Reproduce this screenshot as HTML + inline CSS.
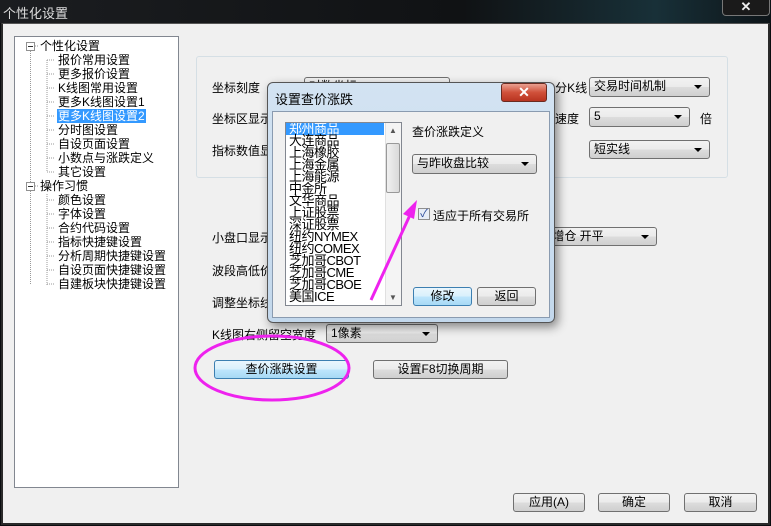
<!DOCTYPE html>
<html><head><meta charset="utf-8"><style>
*{margin:0;padding:0;box-sizing:border-box}
body{width:771px;height:526px;overflow:hidden;background:#0b0d10;font-family:"Liberation Sans","WenQuanYi Zen Hei","Noto Sans CJK SC",sans-serif;font-size:12px;color:#000;position:relative}
.a{position:absolute;white-space:nowrap}
.win{position:absolute;left:1px;top:23px;width:769px;height:502px;background:#f0f0f0;border:2px solid #2a2a2a;border-top:1px solid #555}
.tree{position:absolute;left:14px;top:36px;width:165px;height:452px;background:#fff;border:1px solid #828790}
.ti{position:absolute;height:14px;line-height:14px;font-size:12px}
.btn{position:absolute;border:1px solid #707070;border-radius:3px;background:linear-gradient(#f2f2f2,#ebebeb 50%,#dddddd 50%,#cfcfcf);text-align:center;font-size:12px;line-height:17px}
.btnb{border-color:#3c7fb1;background:linear-gradient(#eaf6fd,#d9f0fc 50%,#bee6fd 50%,#a7d9f5)}
.cb{position:absolute;border:1px solid #707070;border-radius:3px;background:linear-gradient(#f2f2f2,#ebebeb 50%,#dddddd 50%,#cfcfcf);font-size:12px;line-height:17px;padding-left:4px}
.cb:after{content:"";position:absolute;right:7px;top:7px;border-left:4px solid transparent;border-right:4px solid transparent;border-top:4px solid #000}
.gb{position:absolute;left:196px;top:56px;width:532px;height:122px;border:1px solid #d5dfe5;border-radius:3px}
.dlg{position:absolute;left:267px;top:82px;width:288px;height:241px;border:1px solid #555;border-radius:6px;background:linear-gradient(#d3e3f2,#c3d8ec);box-shadow:3px 4px 10px rgba(0,0,0,.45)}
.list{position:absolute;left:285px;top:122px;width:117px;height:184px;background:#fff;border:1px solid #828790;overflow:hidden}
.li{height:12px;line-height:12px;font-size:13px;padding-left:3px;letter-spacing:-0.5px}
</style></head><body>
<div class="a" style="left:0;top:0;width:771px;height:23px;background:linear-gradient(90deg,#1b1d20,#101214 60%,#183038 85%,#0d1418)"></div>
<div class="a" style="left:3px;top:3px;color:#ddd;font-size:13px">个性化设置</div>
<div class="a" style="left:722px;top:0;width:48px;height:16px;border:1px solid #777;border-top:none;border-radius:0 0 4px 4px;background:#1a1a1a;color:#eee;text-align:center;font-size:13px;line-height:14px;font-weight:bold">✕</div>
<div class="win"></div>
<div class="tree">
<svg class="a" style="left:0;top:0" width="165" height="260">
<g stroke="#999" stroke-dasharray="1,1" fill="none">
<path d="M15.5 14V150M15.5 154V248M18 9H24M32 23V134M32 23H40M32 37H40M32 51H40M32 65H40M32 79H40M32 93H40M32 107H40M32 121H40M32 135H40M18 149H24M32 157V248M32 163H40M32 177H40M32 191H40M32 205H40M32 219H40M32 233H40M32 247H40"/>
</g>
<rect x="11.5" y="5.5" width="8" height="8" fill="#fff" stroke="#919191"/><path d="M13 9.5H18" stroke="#333"/>
<rect x="11.5" y="145.5" width="8" height="8" fill="#fff" stroke="#919191"/><path d="M13 149.5H18" stroke="#333"/>
</svg>
<div class="ti" style="left:25px;top:2px">个性化设置</div>
<div class="ti" style="left:43px;top:16px">报价常用设置</div>
<div class="ti" style="left:43px;top:30px">更多报价设置</div>
<div class="ti" style="left:43px;top:44px">K线图常用设置</div>
<div class="ti" style="left:43px;top:58px">更多K线图设置1</div>
<div class="ti" style="left:42px;top:72px;background:#3399ff;color:#fff;padding:0 1px">更多K线图设置2</div>
<div class="ti" style="left:43px;top:86px">分时图设置</div>
<div class="ti" style="left:43px;top:100px">自设页面设置</div>
<div class="ti" style="left:43px;top:114px">小数点与涨跌定义</div>
<div class="ti" style="left:43px;top:128px">其它设置</div>
<div class="ti" style="left:25px;top:142px">操作习惯</div>
<div class="ti" style="left:43px;top:156px">颜色设置</div>
<div class="ti" style="left:43px;top:170px">字体设置</div>
<div class="ti" style="left:43px;top:184px">合约代码设置</div>
<div class="ti" style="left:43px;top:198px">指标快捷键设置</div>
<div class="ti" style="left:43px;top:212px">分析周期快捷键设置</div>
<div class="ti" style="left:43px;top:226px">自设页面快捷键设置</div>
<div class="ti" style="left:43px;top:240px">自建板块快捷键设置</div>
</div>
<div class="gb"></div>
<div class="a" style="left:212px;top:79px">坐标刻度</div>
<div class="cb" style="left:304px;top:77px;width:146px;height:20px">对数坐标</div>
<div class="a" style="left:485px;top:79px">10/30/60/120分K线</div>
<div class="cb" style="left:589px;top:77px;width:121px;height:20px">交易时间机制</div>
<div class="a" style="left:212px;top:110px">坐标区显示</div>
<div class="a" style="left:555px;top:110px">速度</div>
<div class="cb" style="left:589px;top:107px;width:101px;height:20px">5</div>
<div class="a" style="left:700px;top:110px">倍</div>
<div class="a" style="left:212px;top:142px">指标数值显示</div>
<div class="cb" style="left:589px;top:140px;width:121px;height:19px">短实线</div>
<div class="a" style="left:212px;top:229px">小盘口显示</div>
<div class="cb" style="left:520px;top:227px;width:137px;height:19px">&nbsp;&nbsp;&nbsp;&nbsp;&nbsp;-&nbsp; 增仓 开平</div>
<div class="a" style="left:212px;top:262px">波段高低价</div>
<div class="a" style="left:212px;top:294px">调整坐标线</div>
<div class="a" style="left:212px;top:326px">K线图右侧留空宽度</div>
<div class="cb" style="left:326px;top:324px;width:112px;height:19px">1像素</div>
<div class="btn btnb" style="left:214px;top:360px;width:135px;height:19px">查价涨跌设置</div>
<div class="btn" style="left:373px;top:360px;width:135px;height:19px">设置F8切换周期</div>
<div class="btn" style="left:513px;top:493px;width:72px;height:19px">应用(A)</div>
<div class="btn" style="left:598px;top:493px;width:72px;height:19px">确定</div>
<div class="btn" style="left:684px;top:493px;width:73px;height:19px">取消</div>
<svg class="a" style="left:0;top:0" width="771" height="526">
<ellipse cx="272" cy="368" rx="77" ry="32" fill="none" stroke="#ee22ee" stroke-width="3"/>
</svg>
<div class="dlg"></div>
<div class="a" style="left:275px;top:89px;font-size:13px">设置查价涨跌</div>
<div class="a" style="left:501px;top:83px;width:46px;height:19px;border:1px solid #6b2a20;border-radius:3px;background:linear-gradient(#e9a090,#d0503a 50%,#b83420);color:#fff;text-align:center;font-weight:bold;line-height:17px;font-size:14px">✕</div>
<div class="a" style="left:272px;top:111px;width:278px;height:207px;background:#f0f0f0;border:1px solid #8a9bb0"></div>
<div class="list">
<div class="li" style="background:#3399ff;color:#fff;width:98px">郑州商品</div>
<div class="li">大连商品</div><div class="li">上海橡胶</div><div class="li">上海金属</div><div class="li">上海能源</div><div class="li">中金所</div><div class="li">文华商品</div><div class="li">上证股票</div><div class="li">深证股票</div><div class="li">纽约NYMEX</div><div class="li">纽约COMEX</div><div class="li">芝加哥CBOT</div><div class="li">芝加哥CME</div><div class="li">芝加哥CBOE</div><div class="li">美国ICE</div>
<div class="a" style="left:99px;top:0;width:16px;height:182px;background:#f4f4f4;border-left:1px solid #e0e0e0"></div>
<div class="a" style="left:100px;top:20px;width:14px;height:50px;border:1px solid #999;border-radius:2px;background:linear-gradient(90deg,#f0f0f0,#dadada)"></div>
<div class="a" style="left:103px;top:3px;font-size:8px;color:#555">▲</div>
<div class="a" style="left:103px;top:170px;font-size:8px;color:#555">▼</div>
</div>
<div class="a" style="left:412px;top:123px">查价涨跌定义</div>
<div class="cb" style="left:412px;top:154px;width:125px;height:20px">与昨收盘比较</div>
<div class="a" style="left:418px;top:208px;width:12px;height:12px;border:1px solid #8f8f8f;background:#e8eef8;color:#2a4a9a;font-size:11px;line-height:10px;text-align:center">✓</div>
<div class="a" style="left:433px;top:207px">适应于所有交易所</div>
<div class="btn btnb" style="left:413px;top:287px;width:59px;height:19px">修改</div>
<div class="btn" style="left:477px;top:287px;width:59px;height:19px">返回</div>
<svg class="a" style="left:0;top:0" width="771" height="526">
<path d="M371 300L410 215" stroke="#ee22ee" stroke-width="3"/>
<path d="M417 200L403 214L414 219Z" fill="#ee22ee"/>
</svg>
</body></html>
